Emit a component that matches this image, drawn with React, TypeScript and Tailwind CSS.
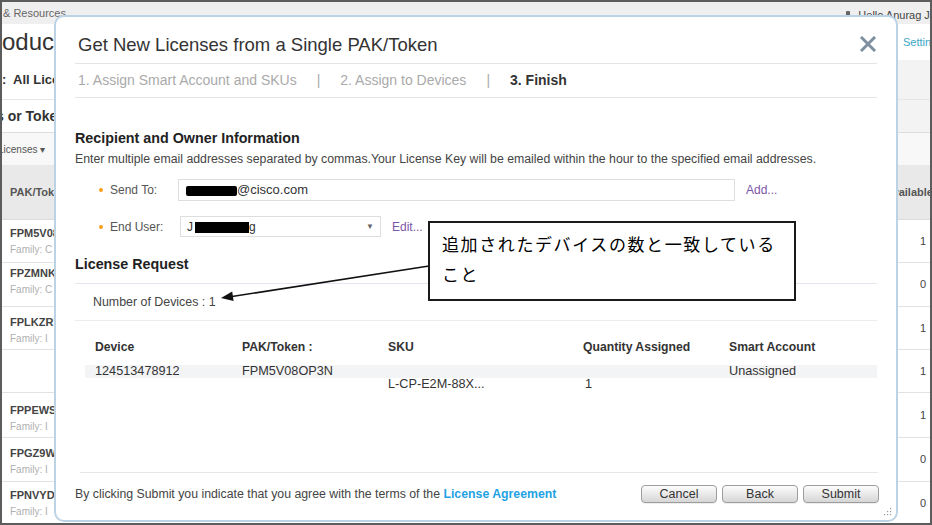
import React from "react";

const rows = [
  { code: "FPM5V08OP3N", fam: "Family: C", v: "1", h: "h-[43px]", pt: "pt-[6px]" },
  { code: "FPZMNK2L9QA", fam: "Family: C", v: "0", h: "h-[44px]", pt: "pt-[3px]" },
  { code: "FPLKZR7T1WB", fam: "Family: I", v: "1", h: "h-[43px]", pt: "pt-[8px]" },
  { code: "", fam: "", v: "1", h: "h-[43px]", pt: "pt-[6px]" },
  { code: "FPPEWS3D8XN", fam: "Family: I", v: "1", h: "h-[45px]", pt: "pt-[10px]" },
  { code: "FPGZ9W4K2MC", fam: "Family: I", v: "0", h: "h-[44px]", pt: "pt-[8px]" },
  { code: "FPNVYD6H3QT", fam: "Family: I", v: "0", h: "h-[43px]", pt: "pt-[6px]" },
];

function Background() {
  return (
    <div className="flex flex-col w-[932px] h-[525px] bg-white text-[#333]">
      <div className="h-[24px] flex justify-between items-center bg-[#efefef] pt-[2px]">
        <span className="pl-[3px] text-[11px] text-[#666]">&amp; Resources</span>
        <div className="flex items-center gap-[8px] whitespace-nowrap text-[11px] text-[#444] -mr-[4px] mt-[4px]">
          <span className="w-[4px] h-[8px] bg-[#666] rounded-[1px]" />
          <span>Hello Anurag Ja</span>
        </div>
      </div>
      <div className="h-[36px] flex justify-between items-center">
        <span className="pl-[2px] text-[24px] text-[#333] leading-none whitespace-nowrap">oducts</span>
        <div className="w-[29px] overflow-hidden whitespace-nowrap text-[11px] text-[#3aa6c6]">Settings</div>
      </div>
      <div className="h-[40px] flex justify-between items-center border-b border-[#e6e6e6]">
        <span className="pl-[2px] text-[13px] font-bold whitespace-nowrap">:&nbsp; All Licenses</span>
        <div className="w-[35px] h-full bg-[#f3f3f3]" />
      </div>
      <div className="h-[33px] flex justify-between items-center border-b border-[#dddddd]">
        <span className="-ml-[4px] text-[14px] font-bold whitespace-nowrap">s or Tokens</span>
        <div className="w-[35px] h-full bg-[#f3f3f3]" />
      </div>
      <div className="h-[32px] flex items-center bg-[#f8f8f8]">
        <span className="-ml-[2px] text-[10px] text-[#555] whitespace-nowrap">Licenses ▾</span>
      </div>
      <div className="h-[55px] flex justify-between items-center bg-[#e9e9e9] border-b border-[#dcdcdc]">
        <span className="pl-[10px] text-[11px] font-bold text-[#555] whitespace-nowrap">PAK/Token</span>
        <div className="w-[35px] overflow-hidden flex justify-start">
          <span className="-ml-[12px] text-[11px] font-bold text-[#555] whitespace-nowrap">Available</span>
        </div>
      </div>
      {rows.map((r, i) => (
        <div key={i} className={`${r.h} flex justify-between border-b border-[#e2e2e2]`}>
          <div className={`pl-[10px] ${r.pt} flex flex-col`}>
            <span className="text-[11px] font-bold text-[#444] leading-[14px] whitespace-nowrap">{r.code}</span>
            <span className="text-[10px] text-[#b0b0b0] leading-[14px] mt-[3px] whitespace-nowrap">{r.fam}</span>
          </div>
          <div className="w-[35px] flex items-center justify-end pr-[6px] text-[11px] text-[#444]">{r.v}</div>
        </div>
      ))}
    </div>
  );
}

function Btn({ label }: { label: string }) {
  return (
    <button className="w-[76px] h-[18px] rounded-[4px] border border-[#9d9d9d] bg-gradient-to-b from-[#fdfdfd] to-[#d6d6d6] text-[12.5px] text-[#333] leading-none shadow-[0_1px_0_#eee]">
      {label}
    </button>
  );
}

function Modal() {
  return (
    <div className="absolute left-[54px] top-[15px] w-[844px] h-[507px] bg-white border-2 border-[#bcd2e5] rounded-[10px] flex flex-col px-[19px] text-[#333]">
      <div className="h-[47px] shrink-0 flex justify-between items-start border-b border-[#e4e4e4]">
        <span className="ml-[3px] mt-[17px] text-[18.5px] leading-[22px] text-[#333]">Get New Licenses from a Single PAK/Token</span>
        <svg className="mt-[19px] mr-[1px]" width="16" height="16" viewBox="0 0 16 16">
          <path d="M2 2 L14 14 M14 2 L2 14" stroke="#7f8fa0" strokeWidth="3" strokeLinecap="square" />
        </svg>
      </div>
      <div className="h-[34px] shrink-0 flex items-center pl-[3px] border-b border-[#e4e4e4] text-[14px] whitespace-nowrap">
        <span className="text-[#aaaaaa]">1. Assign Smart Account and SKUs</span>
        <span className="mx-[20px] text-[#aaaaaa]">|</span>
        <span className="text-[#aaaaaa]">2. Assign to Devices</span>
        <span className="mx-[20px] text-[#aaaaaa]">|</span>
        <span className="font-bold text-[#333]">3. Finish</span>
      </div>

      <div className="mt-[32px] text-[14.3px] leading-[17px] font-bold text-[#222]">Recipient and Owner Information</div>
      <div className="mt-[5px] text-[12.3px] leading-[15px] text-[#444] whitespace-nowrap">
        Enter multiple email addresses separated by commas.Your License Key will be emailed within the hour to the specified email addresses.
      </div>

      <div className="mt-[12px] h-[22px] flex items-center">
        <div className="w-[103px] flex items-center pl-[24px]">
          <span className="w-[4px] h-[4px] rounded-full bg-[#f5a01a]" />
          <span className="ml-[7px] text-[12px] text-[#555]">Send To:</span>
        </div>
        <div className="w-[557px] h-[22px] border border-[#dedede] flex items-center pl-[7px] text-[13px] text-[#333]">
          <span className="w-[51px] h-[10px] bg-black rounded-[2px] mt-[1px]" />
          <span>@cisco.com</span>
        </div>
        <span className="ml-[11px] text-[12px] text-[#7c56a8]">Add...</span>
      </div>

      <div className="mt-[15px] h-[21px] flex items-center">
        <div className="w-[105px] flex items-center pl-[24px]">
          <span className="w-[4px] h-[4px] rounded-full bg-[#f5a01a]" />
          <span className="ml-[7px] text-[12px] text-[#555]">End User:</span>
        </div>
        <div className="w-[201px] h-[21px] border border-[#dedede] flex items-center pl-[6px] pr-[6px] text-[12px] text-[#333]">
          <span>J</span>
          <span className="ml-[2px] w-[54px] h-[11px] bg-black mt-[2px]" />
          <span>g</span>
          <span className="ml-auto text-[8px] text-[#666]">▼</span>
        </div>
        <span className="ml-[11px] text-[12px] text-[#7c56a8]">Edit...</span>
      </div>

      <div className="mt-[19px] pb-[10px] border-b border-[#e9e3ef] text-[14.3px] leading-[17px] font-bold text-[#222]">License Request</div>
      <div className="h-[37px] shrink-0 flex items-center pl-[18px] border-b border-[#ececec] text-[12.4px] text-[#444]">
        Number of Devices : 1
      </div>

      <div className="mt-[19px] ml-[10px] flex flex-col">
        <div className="grid grid-cols-[147px_146px_195px_146px_1fr] pl-[10px] text-[12.2px] leading-[14px] font-bold text-[#333]">
          <span>Device</span>
          <span>PAK/Token :</span>
          <span>SKU</span>
          <span>Quantity Assigned</span>
          <span>Smart Account</span>
        </div>
        <div className="mt-[11px] h-[13px] grid grid-cols-[147px_146px_195px_146px_1fr] pl-[10px] bg-[#f3f4f6] text-[12.7px] leading-[13px] text-[#333]">
          <span>124513478912</span>
          <span>FPM5V08OP3N</span>
          <span />
          <span />
          <span>Unassigned</span>
        </div>
        <div className="h-[13px] grid grid-cols-[147px_146px_195px_146px_1fr] pl-[10px] text-[12.7px] leading-[13px] text-[#333]">
          <span />
          <span />
          <span>L-CP-E2M-88X...</span>
          <span className="pl-[2px]">1</span>
          <span />
        </div>
      </div>

      <div className="flex-1" />

      <div className="h-[48px] shrink-0 border-t border-[#e6e6e6] ml-[5px] -mr-[1px] pt-[12px] flex justify-between items-start">
        <div className="h-[18px] -ml-[5px] flex items-center text-[12.3px] text-[#444] whitespace-nowrap">
          <span>By clicking Submit you indicate that you agree with the terms of the&nbsp;</span>
          <span className="font-bold text-[#1ea2e3]">License Agreement</span>
        </div>
        <div className="flex gap-[5px] -mr-[1px]">
          <Btn label="Cancel" />
          <Btn label="Back" />
          <Btn label="Submit" />
        </div>
      </div>

      <svg className="absolute right-[4px] bottom-[4px]" width="10" height="10" viewBox="0 0 10 10">
        <rect x="8" y="2" width="1.2" height="1.2" fill="#999" />
        <rect x="8" y="5" width="1.2" height="1.2" fill="#999" />
        <rect x="8" y="8" width="1.2" height="1.2" fill="#999" />
        <rect x="5" y="5" width="1.2" height="1.2" fill="#999" />
        <rect x="5" y="8" width="1.2" height="1.2" fill="#999" />
        <rect x="2" y="8" width="1.2" height="1.2" fill="#999" />
      </svg>
    </div>
  );
}

export default function App() {
  return (
    <div
      className="relative w-[932px] h-[525px] overflow-hidden bg-white"
      style={{ fontFamily: '"Liberation Sans", Arial, sans-serif' }}
    >
      <Background />
      <Modal />
      <svg className="absolute left-0 top-0 pointer-events-none" width="932" height="525" viewBox="0 0 932 525">
        <line x1="429" y1="266" x2="232" y2="296.5" stroke="#111" strokeWidth="1.6" />
        <polygon points="221,298 233.6,301 232.2,291.5" fill="#111" />
      </svg>
      <div
        className="absolute left-[428px] top-[221px] w-[368px] h-[80px] border-2 border-[#1a1a1a] bg-white pl-[12px] pt-[6px] text-[17px] leading-[30px] tracking-[1.6px] text-black"
        style={{ fontFamily: '"Noto Sans CJK JP", "Noto Sans", sans-serif' }}
      >
        追加されたデバイスの数と一致している
        <br />
        こと
      </div>
      <div className="absolute inset-0 border-2 border-[#5c5c5c] pointer-events-none" />
    </div>
  );
}
